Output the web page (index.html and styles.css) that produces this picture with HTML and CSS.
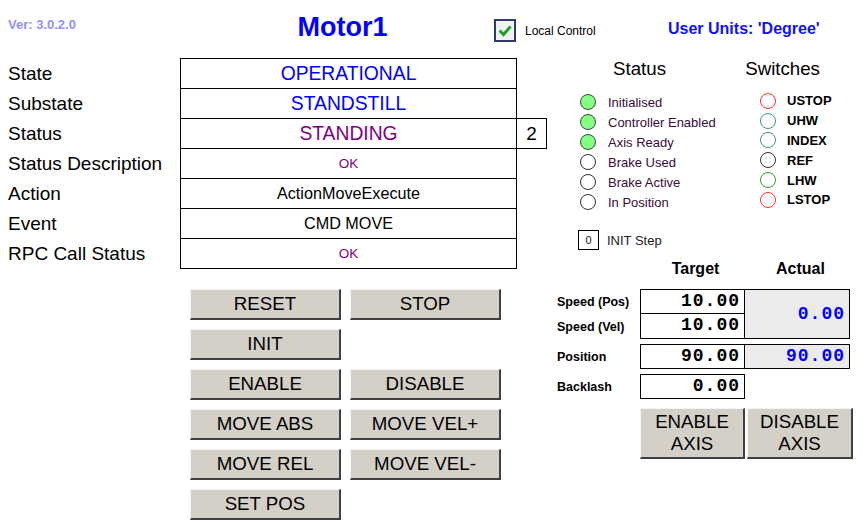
FILE: index.html
```html
<!DOCTYPE html>
<html lang="en">
<head>
  <meta charset="UTF-8">
  <title>Motor1</title>
  <link rel="stylesheet" href="styles.css">
</head>
<body>

  <div class="header">
    <div class="ver">Ver: 3.0.2.0</div>
    <div class="title">Motor1</div>
    <svg class="checkbox" width="22" height="23" viewBox="0 0 22 23">
      <rect x="1" y="1" width="20" height="21" fill="#f2f2f2" stroke="#2d3d6b" stroke-width="2"/>
      <polyline points="5.5,11.5 9.5,15.5 16.5,7.5" fill="none" stroke="#1f9e2a" stroke-width="3"/>
    </svg>
    <div class="local">Local Control</div>
    <div class="units">User Units: 'Degree'</div>
  </div>

  <div class="main">
    <div class="left">
      <table class="info">
        <tr><td class="label">State</td><td class="value big blue">OPERATIONAL</td><td></td></tr>
        <tr><td class="label">Substate</td><td class="value big blue">STANDSTILL</td><td></td></tr>
        <tr><td class="label">Status</td><td class="value big purple">STANDING</td><td class="code">2</td></tr>
        <tr><td class="label">Status Description</td><td class="value small purple">OK</td><td></td></tr>
        <tr><td class="label">Action</td><td class="value mid">ActionMoveExecute</td><td></td></tr>
        <tr><td class="label">Event</td><td class="value mid">CMD MOVE</td><td></td></tr>
        <tr><td class="label">RPC Call Status</td><td class="value small purple">OK</td><td></td></tr>
      </table>

      <div class="buttons">
        <button class="btn">RESET</button>
        <button class="btn">STOP</button>
        <button class="btn">INIT</button>
        <button class="btn new-row">ENABLE</button>
        <button class="btn">DISABLE</button>
        <button class="btn">MOVE ABS</button>
        <button class="btn">MOVE VEL+</button>
        <button class="btn">MOVE REL</button>
        <button class="btn">MOVE VEL-</button>
        <button class="btn">SET POS</button>
      </div>
    </div>

    <div class="right">
      <div class="heads">
        <span class="head-status">Status</span>
        <span class="head-switches">Switches</span>
      </div>

      <div class="lamps">
        <div class="status-list">
          <div class="lamp"><span class="led on"></span>Initialised</div>
          <div class="lamp"><span class="led on"></span>Controller Enabled</div>
          <div class="lamp"><span class="led on"></span>Axis Ready</div>
          <div class="lamp"><span class="led"></span>Brake Used</div>
          <div class="lamp"><span class="led"></span>Brake Active</div>
          <div class="lamp"><span class="led"></span>In Position</div>
        </div>
        <div class="switch-list">
          <div class="lamp"><span class="led red"></span>USTOP</div>
          <div class="lamp"><span class="led green"></span>UHW</div>
          <div class="lamp"><span class="led green"></span>INDEX</div>
          <div class="lamp"><span class="led"></span>REF</div>
          <div class="lamp"><span class="led green2"></span>LHW</div>
          <div class="lamp"><span class="led red"></span>LSTOP</div>
        </div>
      </div>

      <div class="init-step">
        <span class="step-box">0</span>
        <span>INIT Step</span>
      </div>

      <div class="col-heads">
        <span>Target</span>
        <span>Actual</span>
      </div>

      <div class="speed-block">
        <div class="row-label">Speed (Pos)</div>
        <div class="num target">10.00</div>
        <div class="num actual tall">0.00</div>
        <div class="row-label">Speed (Vel)</div>
        <div class="num target second">10.00</div>
      </div>

      <div class="val-row">
        <div class="row-label">Position</div>
        <div class="num target">90.00</div>
        <div class="num actual">90.00</div>
      </div>

      <div class="val-row">
        <div class="row-label">Backlash</div>
        <div class="num target">0.00</div>
      </div>

      <div class="axis-buttons">
        <button class="btn axis">ENABLE<br>AXIS</button>
        <button class="btn axis">DISABLE<br>AXIS</button>
      </div>
    </div>
  </div>

</body>
</html>
```

FILE: styles.css
```css
body {
  margin: 0;
  font-family: "Liberation Sans", Arial, sans-serif;
  background: #fff;
  color: #000;
}

/* header */
.header {
  display: flex;
  align-items: flex-start;
  height: 58px;
}
.ver {
  width: 172px;
  padding-left: 8px;
  margin-top: 17px;
  font-size: 13px;
  line-height: 15px;
  font-weight: bold;
  color: #9090ff;
}
.title {
  width: 303px;
  padding-left: 11px;
  margin-top: 12px;
  text-align: center;
  font-size: 27px;
  line-height: 30px;
  font-weight: bold;
  color: #0000ff;
}
.checkbox {
  margin-top: 19px;
}
.local {
  width: 143px;
  margin-left: 9px;
  margin-top: 24px;
  font-size: 12px;
  line-height: 14px;
}
.units {
  margin-top: 20px;
  font-size: 16px;
  line-height: 18px;
  font-weight: bold;
  color: #1010ff;
}

.main {
  display: flex;
  align-items: flex-start;
}
.left {
  width: 557px;
}

/* info table */
.info {
  border-collapse: collapse;
  table-layout: fixed;
}
.info tr {
  height: 30px;
}
.info td {
  padding: 0;
}
.label {
  width: 172px;
  padding-left: 8px !important;
  font-size: 19px;
}
.value {
  width: 335px;
  border: 1px solid #000;
  text-align: center;
}
.code {
  width: 29px;
  border: 1px solid #000;
  text-align: center;
  font-size: 19px;
}
.big {
  font-size: 19.3px;
}
.mid {
  font-size: 16.2px;
}
.small {
  font-size: 13.5px;
}
.blue {
  color: #0000ff;
}
.purple {
  color: #800080;
}

/* buttons */
.buttons {
  display: grid;
  grid-template-columns: 151px 151px;
  grid-auto-rows: 31px;
  column-gap: 9px;
  row-gap: 9px;
  margin: 20px 0 0 190px;
}
.new-row {
  grid-column: 1;
}
.btn {
  box-sizing: border-box;
  padding: 0;
  background: #d4d0c8;
  border-top: 1px solid #f4f4f4;
  border-left: 1px solid #f4f4f4;
  border-right: 2px solid #404040;
  border-bottom: 2px solid #404040;
  font-family: "Liberation Sans", Arial, sans-serif;
  font-size: 18.7px;
  color: #000;
}

/* right side */
.right {
  width: 306px;
}
.heads {
  height: 20px;
  margin-top: 1px;
  font-size: 18.7px;
  line-height: 20px;
}
.head-status {
  margin-left: 56px;
}
.head-switches {
  margin-left: 74px;
}
.lamps {
  display: flex;
  margin-top: 13px;
}
.status-list {
  width: 180px;
  margin-left: 23px;
  color: #3a0a3a;
}
.switch-list {
  margin-top: -1px;
  font-weight: bold;
}
.lamp {
  display: flex;
  align-items: center;
  gap: 12px;
  height: 20px;
  font-size: 13px;
}
.switch-list .lamp {
  height: 19.8px;
  gap: 11px;
}
.led {
  box-sizing: border-box;
  width: 16px;
  height: 16px;
  border: 1px solid #333;
  border-radius: 50%;
  background: #fff;
}
.led.on {
  background: #80ff80;
  border-color: #444;
}
.led.red {
  border-color: #ff3030;
}
.led.green {
  border-color: #3a9a6a;
}
.led.green2 {
  border-color: #2f9a3a;
}

.init-step {
  display: flex;
  align-items: center;
  gap: 8px;
  margin: 18px 0 0 21px;
  font-size: 13px;
  color: #202020;
}
.step-box {
  box-sizing: border-box;
  width: 21px;
  height: 20px;
  border: 1px solid #000;
  text-align: center;
  font-size: 11px;
  line-height: 18px;
}

.col-heads {
  display: grid;
  grid-template-columns: 105px 105px;
  margin: 10px 0 0 86px;
  font-size: 16px;
  line-height: 18px;
  font-weight: bold;
  text-align: center;
}

.speed-block {
  display: grid;
  grid-template-columns: 83px 105px 105px;
  grid-template-rows: 25px 25px;
  margin-top: 11px;
}
.val-row {
  display: grid;
  grid-template-columns: 83px 105px 105px;
  grid-template-rows: 25px;
  margin-top: 5px;
}
.row-label {
  display: flex;
  align-items: center;
  font-size: 12.5px;
  font-weight: bold;
  padding-top: 1px;
}
.num {
  box-sizing: border-box;
  border: 1px solid #000;
  padding-right: 4px;
  text-align: right;
  font-family: "Liberation Mono", "Courier New", monospace;
  font-size: 18px;
  font-weight: bold;
  letter-spacing: 1px;
  line-height: 23px;
}
.target.second {
  border-top: none;
}
.actual {
  border-left: none;
  background: #ebebeb;
  color: #0000ff;
}
.actual.tall {
  grid-row: 1 / span 2;
  grid-column: 3;
  line-height: 48px;
}

.axis-buttons {
  display: grid;
  grid-template-columns: 105px 106px;
  grid-template-rows: 51px;
  column-gap: 2px;
  margin: 9px 0 0 83px;
}
.axis {
  line-height: 22px;
}
```
